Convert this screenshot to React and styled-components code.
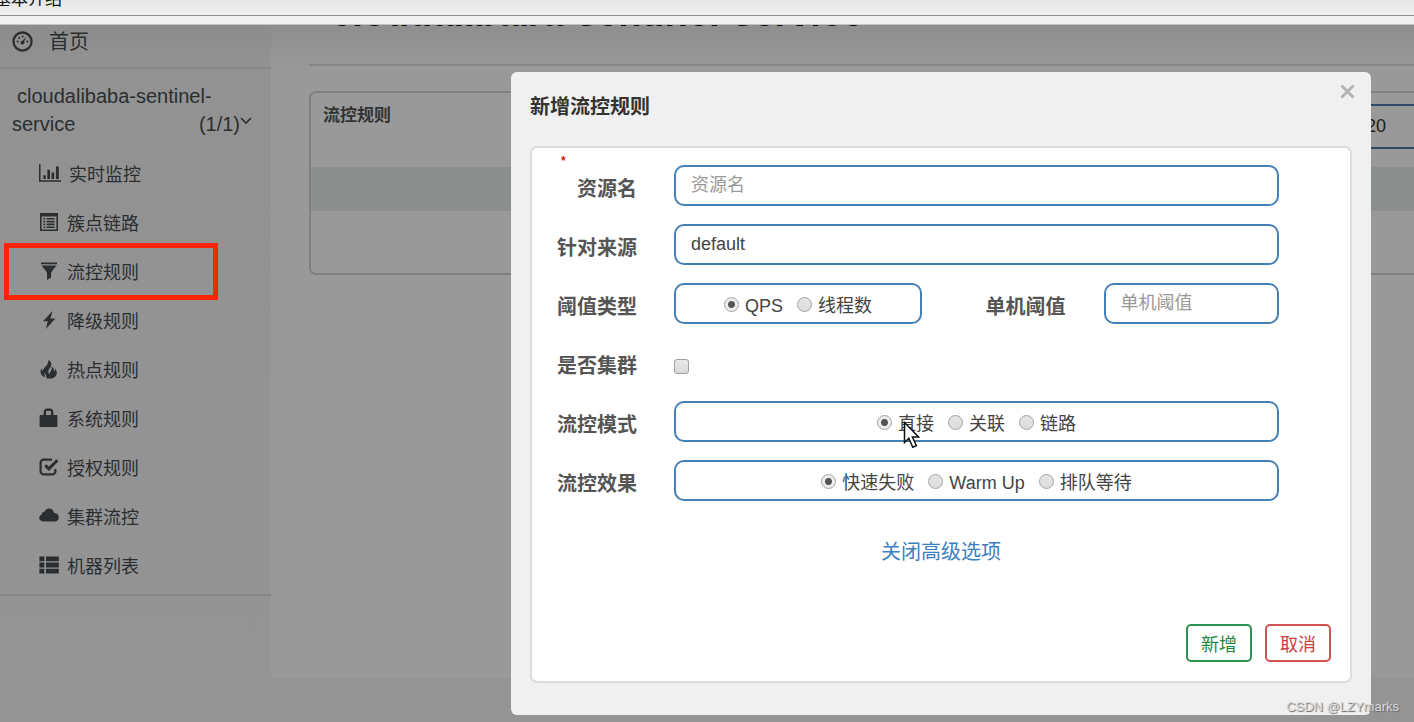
import React, { useState } from 'react';
import styled, { createGlobalStyle } from 'styled-components';

const GlobalStyle = createGlobalStyle`
  * {
    box-sizing: border-box;
  }
  body {
    margin: 0;
    background: #949494;
    color: #333;
    font-family: "Liberation Sans", "Noto Sans CJK SC", sans-serif;
    font-size: 18px;
  }
  input, button {
    font-family: inherit;
    font-size: inherit;
  }
`

const Page = styled.div`
    position: relative;
    display: flex;
    flex-direction: column;
    min-height: 100vh;
    overflow: hidden;
`

const TabBar = styled.header`
    height: 16px;
    overflow: hidden;
    display: flex;
    align-items: flex-end;
    padding-bottom: 5px;
    background: linear-gradient(#e6e6e6, #efefef);
    border-bottom: 1px solid #8f8f8f;
    color: #111;
    font-size: 17px;
    line-height: 20px;
`

const TabTitle = styled.span`
    margin-left: -6px;
`

const ToolStrip = styled.div`
    height: 9px;
    background: #f0f0f0;
    border-bottom: 1px solid #c4c4c4;
`

const Body = styled.div`
    flex: 1;
    display: flex;
`

const Sidebar = styled.nav`
    flex: 0 0 271px;
    background: linear-gradient(#8c8c8c, #929292 40px, #949494);
    a {
        color: #2b2e31;
        text-decoration: none;
    }
`

const HomeLink = styled.a`
    display: flex;
    align-items: center;
    gap: 16px;
    height: 44px;
    padding: 0 12px 9px;
    border-bottom: 2px solid #878787;
    font-size: 20px;
    line-height: 28px;
`

const AppLink = styled.a`
    display: flex;
    flex-wrap: wrap;
    justify-content: space-between;
    padding: 13px 19px 10px 12px;
    font-size: 20px;
    line-height: 28px;
`

const AppName = styled.span`
    flex-basis: 100%;
    padding-left: 5px;
`

const AppCount = styled.span`
    display: flex;
    align-items: center;
    svg {
        margin-bottom: 6px;
    }
`

const MenuList = styled.ul`
    margin: 0;
    padding: 0 0 5px;
    list-style: none;
    border-bottom: 2px solid #868686;
`

const MenuItem = styled.li`
    position: relative;
    a {
        display: flex;
        align-items: center;
        gap: 8px;
        height: 49px;
        padding-left: 39px;
    }
`

const Highlight = styled.div`
    position: absolute;
    top: -3px;
    bottom: -5px;
    left: 4px;
    width: 214px;
    border: 5px solid #f92509;
    pointer-events: none;
`

const Main = styled.main`
    flex: 1;
    min-width: 0;
    margin-bottom: 44px;
    padding-left: 38px;
    overflow: hidden;
    background: linear-gradient(#8e8e8e, #999 45px);
`

const PageHead = styled.div`
    display: flex;
    align-items: flex-end;
    height: 41px;
    padding: 0 0 32px 22px;
    overflow: hidden;
    border-bottom: 2px solid #868686;
    h1 {
        margin: 0;
        color: #0a0a0a;
        font-size: 38px;
        line-height: 38px;
    }
`

const RuleCard = styled.section`
    height: 184px;
    margin: 25px -40px 0 0;
    border: 2px solid #808080;
    border-radius: 7px;
`

const RuleHead = styled.div`
    display: flex;
    justify-content: space-between;
    align-items: flex-start;
    height: 74px;
    padding: 11px 10px 0 12px;
    h2 {
        margin: 0;
        font-size: 17px;
        line-height: 24px;
    }
`

const PageSize = styled.input`
    width: 90px;
    height: 45px;
    padding: 0 12px;
    border: 2px solid #2e4a66;
    background: transparent;
    color: #1c1c1c;
`

const RuleBand = styled.div`
    height: 44px;
    background: #8b8f8e;
`

const Overlay = styled.div`
    position: absolute;
    top: 72px;
    left: 0;
    right: 0;
    display: flex;
    justify-content: flex-end;
    padding: 0 43px 0 20px;
`

const Dialog = styled.div`
    width: 860px;
    max-width: 100%;
    padding: 0 19px 32px;
    border-radius: 6px;
    background: #f0f0f0;
`

const DialogHead = styled.div`
    display: flex;
    justify-content: space-between;
    align-items: flex-start;
    height: 74px;
    padding-top: 8px;
    h3 {
        margin: 11px 0 0;
        font-size: 20px;
        line-height: 32px;
    }
`

const CloseButton = styled.button`
    display: flex;
    padding: 4px 0;
    margin-right: -3px;
    border: 0;
    background: none;
    color: #b4b4b4;
`

const Panel = styled.form`
    padding: 17px 19px 19px 0;
    border: 2px solid #dcdcdc;
    border-radius: 7px;
    background: #fff;
`

const Fields = styled.div`
    display: flex;
    flex-direction: column;
    gap: 18px;
    padding-right: 52px;
`

const Row = styled.div`
    display: grid;
    grid-template-columns: 105px 1fr;
    column-gap: 37px;
    height: 41px;
    align-items: center;
`

const Split = styled.div`
    display: grid;
    grid-template-columns: 41fr 30fr 29fr;
    align-items: center;
`

const Label = styled.label`
    position: relative;
    padding-top: 6px;
    padding-right: ${props => props.$inner ? '38px' : '0'};
    color: #555;
    font-size: 20px;
    font-weight: bold;
    line-height: 28px;
    text-align: right;
    white-space: nowrap;
`

const Required = styled.span`
    position: absolute;
    top: -18px;
    left: 29px;
    color: #d0231a;
    font-size: 12px;
    line-height: 20px;
`

const TextBox = styled.input`
    width: 100%;
    height: 41px;
    padding: 0 15px;
    border: 2px solid #4580b5;
    border-radius: 10px;
    background: #fff;
    color: #444;
    &::placeholder {
        color: #999;
        opacity: 1;
    }
`

const RadioBox = styled.div`
    display: flex;
    justify-content: center;
    align-items: center;
    gap: 14px;
    height: 41px;
    padding-top: 4px;
    border: 2px solid #4580b5;
    border-radius: 10px;
    label {
        position: relative;
        display: flex;
        align-items: center;
        gap: 6px;
        color: #444;
        line-height: 26px;
        white-space: nowrap;
    }
`

const Radio = styled.input`
    appearance: none;
    width: 15px;
    height: 15px;
    margin: 0 0 2px;
    border: 1px solid #a3a3a3;
    border-radius: 50%;
    background: linear-gradient(#e4e4e4, #dcdcdc);
    &:checked {
        background: radial-gradient(circle, #555 0, #555 3px, #ececec 4px);
    }
`

const Checkbox = styled.input`
    appearance: none;
    width: 15px;
    height: 15px;
    margin: 8px 0 0;
    border: 1px solid #a0a0a0;
    border-radius: 3px;
    background: linear-gradient(#e8e8e8, #dadada);
    &:checked {
        background: #555;
    }
`

const Cursor = styled.svg`
    position: absolute;
    top: 10px;
    left: 26px;
    pointer-events: none;
`

const Advanced = styled.div`
    padding: 37px 0 58px 19px;
    text-align: center;
    a {
        color: #3a7fc1;
        font-size: 20px;
        line-height: 28px;
        text-decoration: none;
    }
`

const Actions = styled.div`
    display: flex;
    justify-content: flex-end;
    gap: 13px;
`

const ActionButton = styled.button`
    width: 66px;
    height: 38px;
    padding: 0;
    border: 2px solid ${props => props.$danger ? '#d2504e' : '#2f9150'};
    border-radius: 5px;
    background: #fff;
    color: ${props => props.$danger ? '#c9403e' : '#23883f'};
`

const Watermark = styled.div`
    position: absolute;
    right: 15px;
    bottom: 6px;
    color: #dcdcdc;
    font-size: 13px;
    line-height: 18px;
    text-shadow: 1px 1px 1px #666;
`

const Icon = ({ size = 20, children }) => (
    <svg width={size} height={size} viewBox="0 0 20 20" fill="currentColor" aria-hidden="true">{children}</svg>
)

const GaugeIcon = () => (
    <Icon size={21}>
        <circle cx="10" cy="10" r="8.6" fill="none" stroke="currentColor" strokeWidth="2.2" />
        <circle cx="5.4" cy="10" r="1" />
        <circle cx="6.8" cy="6.6" r="1" />
        <circle cx="10" cy="5.2" r="1" />
        <circle cx="14.6" cy="10" r="1" />
        <path d="M13.9 5.4 11.5 10a1.8 1.8 0 1 1-1.6-.8z" />
    </Icon>
)

const ChevronIcon = () => (
    <svg width="12" height="8" viewBox="0 0 12 8" fill="none" stroke="currentColor" strokeWidth="1.6" aria-hidden="true">
        <path d="M1 1l5 5 5-5" />
    </svg>
)

const menu = [
    { text: '实时监控', size: 22, icon: <path d="M0 2h1.4v14.6H20V18H0zM4 12h2.2v3.4H4zM7.6 7h2.4v8.400H7.6zM11.4 9.500h2.4v5.900h-2.400zM15.400 4h2.600v11.400h-2.600z" /> },
    { text: '簇点链路', icon: <path fillRule="evenodd" d="M1 1h18v18H1zM2.6 4.4v13h14.8v-13zM4.4 6h1.8v1.6H4.4zM7.6 6h8v1.6h-8zM4.4 8.8h1.8v1.6H4.4zM7.6 8.8h8v1.6h-8zM4.4 11.6h1.8v1.6H4.4zM7.6 11.6h8v1.6h-8zM4.4 14.4h1.8V16H4.4zM7.6 14.4h8V16h-8z" /> },
    { text: '流控规则', marked: true, icon: <path d="M2 1.4h16v1.8H2zM2.6 4.4h14.8l-5.3 7v5L8 19v-7.6z" /> },
    { text: '降级规则', icon: <path d="M13.6 1 4 11.2h4.8L6.8 19 16.4 8.4h-5z" /> },
    { text: '热点规则', icon: <path d="M9.4.8c4 2.6 3.4 6 1.4 8.4-1.8 2.2-2 4.2-.6 6.2.2-2.6 3.4-3.6 2.4-7.8 2.2 1.4 2.8 3.2 2.4 5.2.8-.6 1.2-2 .8-3.6 3.4 4 2.4 8.4-2.6 10.2H7.6C7.8 17.8 6.2 16.4 6 13.6c-.8 1.2-.6 2.4.2 4.8C1.6 16.4.2 12.6 3 9.2c-.2 1.4.2 2.2.8 2.8.8-4.2 6.2-5.6 5.6-11.2z" /> },
    { text: '系统规则', icon: <path fillRule="evenodd" d="M4.600 7V4.600C4.600 1.800 6 .6 8 .6h3c2 0 3.400 1.200 3.400 4V7h3c.6 0 1 .4 1 1v10c0 .6-.4 1-1 1H1.600c-.6 0-1-.4-1-1V8c0-.6.4-1 1-1zm2.400 0h5V4.200c0-.8-.3-1.200-1-1.200H8c-.7 0-1 .4-1 1.200z" /> },
    {
        text: '授权规则', icon: (
            <g fill="none" stroke="currentColor">
                <path strokeWidth="2.2" d="M13 2.6H4.6a3 3 0 0 0-3 3v8.8a3 3 0 0 0 3 3h8.8a3 3 0 0 0 3-3V12" />
                <path strokeWidth="3" d="M6.2 8.2l3.6 3.6 8.6-8.6" />
            </g>
        )
    },
    { text: '集群流控', icon: <path d="M4.4 15.4C1.8 15.4.2 13.8.2 11.8c0-1.8 1.2-3 2.6-3.4C2.8 6.6 4 5.6 5.6 5.8 6.4 3.6 8 2.4 10 2.4c2.8 0 4.8 1.8 5 4.6 2.8-.2 4.8 1.6 4.8 4.2 0 2.4-1.8 4.2-4.2 4.2z" /> },
    { text: '机器列表', icon: <path d="M.4 1.4h5v4.8h-5zM7 1.4h12.8v4.8H7zM.4 7.6h5v4.8h-5zM7 7.6h12.8v4.8H7zM.4 13.8h5v4.8h-5zM7 13.8h12.8v4.8H7z" /> },
]

const RadioGroup = ({ name, label, options, pointer }) => {
    const [value, setValue] = useState(options[0])
    return (
        <RadioBox role="radiogroup" aria-label={label}>
            {options.map((option, i) => (
                <label key={option}>
                    <Radio type="radio" name={name} checked={value === option} onChange={() => setValue(option)} />
                    {option}
                    {pointer && i === 0 && (
                        <Cursor width="18" height="28" viewBox="0 0 18 28" aria-hidden="true">
                            <path d="M1.5 1.5v20l4.3-4.200 4 9 3.600-1.600-4-8.700h6.200z" fill="#fff" stroke="#111" strokeWidth="1.5" />
                        </Cursor>
                    )}
                </label>
            ))}
        </RadioBox>
    )
}

const App = () => (
    <Page>
        <GlobalStyle />
        <TabBar><TabTitle>基本介绍</TabTitle></TabBar>
        <ToolStrip />
        <Body>
            <Sidebar>
                <HomeLink href="#home"><GaugeIcon />首页</HomeLink>
                <AppLink href="#app">
                    <AppName>cloudalibaba-sentinel-</AppName>
                    <span>service</span>
                    <AppCount>(1/1)<ChevronIcon /></AppCount>
                </AppLink>
                <MenuList>
                    {menu.map(item => (
                        <MenuItem key={item.text}>
                            <a href="#rule"><Icon size={item.size}>{item.icon}</Icon>{item.text}</a>
                            {item.marked && <Highlight />}
                        </MenuItem>
                    ))}
                </MenuList>
            </Sidebar>
            <Main>
                <PageHead><h1>cloudalibaba-sentinel-service</h1></PageHead>
                <RuleCard>
                    <RuleHead>
                        <h2>流控规则</h2>
                        <PageSize aria-label="每页条数" defaultValue="20" />
                    </RuleHead>
                    <RuleBand />
                </RuleCard>
            </Main>
        </Body>
        <Overlay>
            <Dialog role="dialog" aria-labelledby="dialog-title">
                <DialogHead>
                    <h3 id="dialog-title">新增流控规则</h3>
                    <CloseButton type="button" aria-label="关闭">
                        <svg width="15" height="15" viewBox="0 0 15 15" fill="none" stroke="currentColor" strokeWidth="3">
                            <path d="M1.5 1.5l12 12M13.5 1.5l-12 12" />
                        </svg>
                    </CloseButton>
                </DialogHead>
                <Panel onSubmit={e => e.preventDefault()}>
                    <Fields>
                        <Row>
                            <Label htmlFor="resource"><Required>*</Required>资源名</Label>
                            <TextBox id="resource" placeholder="资源名" />
                        </Row>
                        <Row>
                            <Label htmlFor="origin">针对来源</Label>
                            <TextBox id="origin" defaultValue="default" />
                        </Row>
                        <Row>
                            <Label as="span">阈值类型</Label>
                            <Split>
                                <RadioGroup name="grade" label="阈值类型" options={['QPS', '线程数']} />
                                <Label htmlFor="count" $inner>单机阈值</Label>
                                <TextBox id="count" placeholder="单机阈值" />
                            </Split>
                        </Row>
                        <Row>
                            <Label htmlFor="cluster">是否集群</Label>
                            <Checkbox id="cluster" type="checkbox" />
                        </Row>
                        <Row>
                            <Label as="span">流控模式</Label>
                            <RadioGroup name="strategy" label="流控模式" options={['直接', '关联', '链路']} pointer />
                        </Row>
                        <Row>
                            <Label as="span">流控效果</Label>
                            <RadioGroup name="behavior" label="流控效果" options={['快速失败', 'Warm Up', '排队等待']} />
                        </Row>
                    </Fields>
                    <Advanced><a href="#advanced">关闭高级选项</a></Advanced>
                    <Actions>
                        <ActionButton type="submit">新增</ActionButton>
                        <ActionButton type="button" $danger>取消</ActionButton>
                    </Actions>
                </Panel>
            </Dialog>
        </Overlay>
        <Watermark>CSDN @LZYmarks</Watermark>
    </Page>
)

export default App;
